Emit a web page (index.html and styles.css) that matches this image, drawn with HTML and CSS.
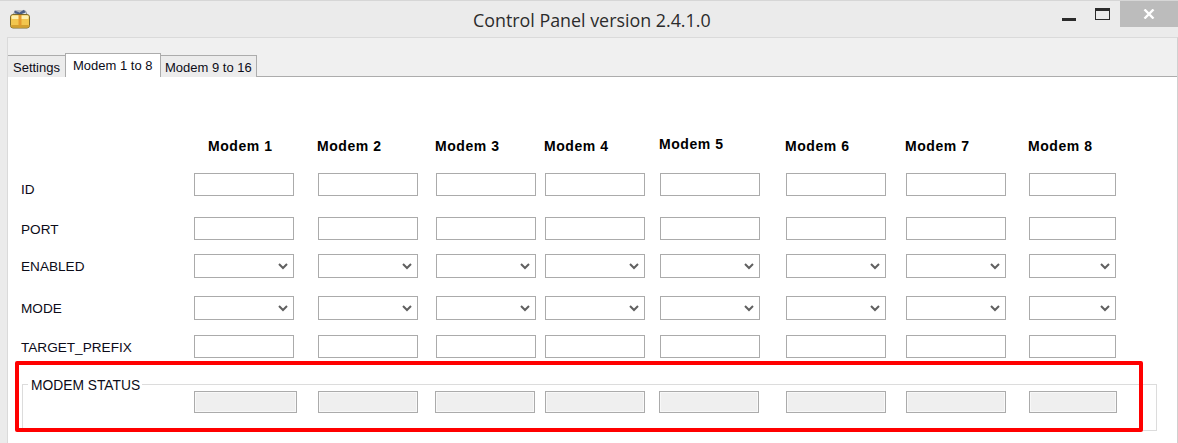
FILE: index.html
```html
<!DOCTYPE html>
<html lang="en">
<head>
  <meta charset="UTF-8" />
  <title>Control Panel version 2.4.1.0</title>
  <link rel="stylesheet" href="styles.css">
</head>
<body>

<div class="window">
  <header class="titlebar">
    <svg class="app-icon" width="20" height="20" viewBox="0 0 20 20">
      <path d="M3.5 5.5L5 2H15.5L17 5.5" fill="#dfe3e8" stroke="#8a8f96"/>
      <path d="M4.5 1.5L9.5 3.5L14 0.8L15.5 3.5L10.5 5.5L5 4.5Z" fill="#4b5f86"/>
      <rect x="0.5" y="5.5" width="19" height="13.5" rx="2.5" fill="#f2c64e" stroke="#7d6a2a"/>
      <rect x="1.5" y="6.5" width="17" height="3.5" rx="1" fill="#fdf0ae"/>
      <rect x="8.5" y="6" width="3" height="12.5" fill="#e59a2e"/>
      <rect x="1" y="16" width="18" height="2.5" rx="1" fill="#d4a02e"/>
    </svg>
    <h1 class="title">Control Panel version 2.4.1.0</h1>
    <div class="controls">
      <span class="minimize"></span>
      <span class="maximize"></span>
      <span class="close">
        <svg width="12" height="10" viewBox="0 0 12 10">
          <path d="M1.5 0.5L10.5 9.5M10.5 0.5L1.5 9.5" stroke="#fff" stroke-width="2.4" fill="none"/>
        </svg>
      </span>
    </div>
  </header>

  <div class="panel">
    <nav class="tabs">
      <a class="tab first">Settings</a>
      <a class="tab active">Modem 1 to 8</a>
      <a class="tab">Modem 9 to 16</a>
    </nav>

    <div class="page">
      <div class="grid">
        <span></span>
        <b class="head first">Modem 1</b>
        <b class="head">Modem 2</b>
        <b class="head">Modem 3</b>
        <b class="head">Modem 4</b>
        <b class="head raised">Modem 5</b>
        <b class="head">Modem 6</b>
        <b class="head">Modem 7</b>
        <b class="head">Modem 8</b>

        <label class="row-label id">ID</label>
        <input class="field"><input class="field"><input class="field"><input class="field">
        <input class="field"><input class="field"><input class="field"><input class="field short">

        <label class="row-label">PORT</label>
        <input class="field"><input class="field"><input class="field"><input class="field">
        <input class="field"><input class="field"><input class="field"><input class="field short">

        <label class="row-label">ENABLED</label>
        <div class="combo"><svg viewBox="0 0 10 7"><path d="M1 1L5 5L9 1" /></svg></div>
        <div class="combo"><svg viewBox="0 0 10 7"><path d="M1 1L5 5L9 1" /></svg></div>
        <div class="combo"><svg viewBox="0 0 10 7"><path d="M1 1L5 5L9 1" /></svg></div>
        <div class="combo"><svg viewBox="0 0 10 7"><path d="M1 1L5 5L9 1" /></svg></div>
        <div class="combo"><svg viewBox="0 0 10 7"><path d="M1 1L5 5L9 1" /></svg></div>
        <div class="combo"><svg viewBox="0 0 10 7"><path d="M1 1L5 5L9 1" /></svg></div>
        <div class="combo"><svg viewBox="0 0 10 7"><path d="M1 1L5 5L9 1" /></svg></div>
        <div class="combo short"><svg viewBox="0 0 10 7"><path d="M1 1L5 5L9 1" /></svg></div>

        <label class="row-label">MODE</label>
        <div class="combo"><svg viewBox="0 0 10 7"><path d="M1 1L5 5L9 1" /></svg></div>
        <div class="combo"><svg viewBox="0 0 10 7"><path d="M1 1L5 5L9 1" /></svg></div>
        <div class="combo"><svg viewBox="0 0 10 7"><path d="M1 1L5 5L9 1" /></svg></div>
        <div class="combo"><svg viewBox="0 0 10 7"><path d="M1 1L5 5L9 1" /></svg></div>
        <div class="combo"><svg viewBox="0 0 10 7"><path d="M1 1L5 5L9 1" /></svg></div>
        <div class="combo"><svg viewBox="0 0 10 7"><path d="M1 1L5 5L9 1" /></svg></div>
        <div class="combo"><svg viewBox="0 0 10 7"><path d="M1 1L5 5L9 1" /></svg></div>
        <div class="combo short"><svg viewBox="0 0 10 7"><path d="M1 1L5 5L9 1" /></svg></div>

        <label class="row-label">TARGET_PREFIX</label>
        <input class="field"><input class="field"><input class="field"><input class="field">
        <input class="field"><input class="field"><input class="field"><input class="field short">
      </div>

      <fieldset class="status">
        <legend>MODEM STATUS</legend>
        <div class="status-row">
          <input class="readout wide" disabled>
          <input class="readout" disabled>
          <input class="readout" disabled>
          <input class="readout" disabled>
          <input class="readout" disabled>
          <input class="readout" disabled>
          <input class="readout" disabled>
          <input class="readout last" disabled>
        </div>
      </fieldset>

      <div class="highlight"></div>
    </div>
  </div>
</div>

</body>
</html>
```

FILE: styles.css
```css
* { box-sizing: border-box; }
html, body {
  margin: 0; padding: 0;
  width: 1178px; height: 443px;
  overflow: hidden;
}
body {
  font-family: "Liberation Sans", Arial, sans-serif;
  font-size: 13.6px;
  color: #0c0c18;
  background: #ebebeb;
}
.window {
  height: 443px;
  border-top: 1px solid #d6d6d6;
  display: flex;
  flex-direction: column;
}
.titlebar {
  height: 36px;
  display: flex;
  align-items: flex-start;
  flex: none;
}
.app-icon {
  margin: 8px 0 0 10px;
  flex: none;
}
.title {
  margin: 7px 0 0 443px;
  font-family: "Open Sans", sans-serif;
  font-size: 17.85px;
  font-weight: 400;
  line-height: 24px;
  color: #2b2b2b;
  white-space: nowrap;
}
.controls {
  margin-left: auto;
  display: flex;
  align-items: flex-start;
}
.minimize {
  width: 14px; height: 3px;
  margin-top: 17px;
  background: #2b2b2b;
}
.maximize {
  width: 15px; height: 12px;
  margin: 7px 0 0 19px;
  border: 1px solid #2b2b2b;
  border-top-width: 3px;
}
.close {
  width: 58px; height: 26px;
  margin-left: 10px;
  background: #bcbcbc;
  display: flex;
  align-items: center;
  justify-content: center;
}
.panel {
  flex: 1;
  margin-left: 7px;
  border: 1px solid #dadada;
  border-right-color: #d0d0d0;
  border-bottom: none;
  background: #f0f0f0;
  display: flex;
  flex-direction: column;
  min-height: 0;
}
.tabs {
  flex: none;
  height: 39px;
  display: flex;
  align-items: flex-end;
  position: relative;
  z-index: 1;
  margin-bottom: -1px;
}
.tab {
  height: 22px;
  padding: 4px 4px 0 4px;
  border: 1px solid #acacac;
  border-left: none;
  border-bottom: none;
  background: #ececec;
  font-size: 13px;
  line-height: 15px;
  white-space: nowrap;
}
.tab.first { padding: 4px 5px 0 5px; }
.tab.active {
  height: 24px;
  width: 96px;
  padding: 4px 0 0 7px;
  border-left: 1px solid #acacac;
  background: #fff;
  margin-left: -1px;
}
.page {
  flex: 1;
  position: relative;
  background: #fff;
  border-top: 1px solid #acacac;
  padding: 60px 0 0 13px;
}
.grid {
  display: grid;
  grid-template-columns: 173px 124px 118px 109px 115px 126px 120px 123px 90px;
  grid-template-rows: 36px 44px 37px 42px 39px 26px;
  justify-items: start;
  align-items: start;
}
.head {
  font-size: 14px;
  letter-spacing: 0.55px;
  line-height: 18px;
  margin-left: -1px;
  color: #000;
  white-space: nowrap;
}
.head.first { margin-left: 14px; }
.head.raised { margin-top: -2px; }
.row-label {
  line-height: 16px;
  margin-top: 5px;
  white-space: nowrap;
}
.row-label.id { margin-top: 9px; }
.field, .combo {
  width: 100px;
  height: 23px;
  padding: 0;
  border: 1px solid #ababab;
  border-radius: 0;
  background: #fff;
  outline: none;
}
.field { margin: 0; }
.combo {
  height: 24px;
  display: flex;
  align-items: center;
  justify-content: flex-end;
  padding-right: 5px;
}
.combo svg {
  width: 10px; height: 7px;
  fill: none;
  stroke: #606060;
  stroke-width: 2;
}
.short { width: 87px; }
.status {
  position: absolute;
  left: 14px; top: 307px;
  width: 1135px;
  height: 47px;
  margin: 0;
  padding: 0 0 0 171px;
  border: 1px solid #dcdcdc;
}
.status legend {
  padding: 0 2px 0 3px;
  font-size: 13.8px;
  line-height: 14px;
  position: absolute;
  top: -6px;
  left: 5px;
  background: #fff;
}
.status-row {
  display: grid;
  grid-template-columns: 124px 117px 110px 114px 127px 120px 123px 88px;
  padding-top: 6px;
}
.readout {
  width: 100px;
  height: 22px;
  padding: 0;
  margin: 0;
  border: 1px solid #ababab;
  box-shadow: inset 0 0 0 1px #f8f8f8;
  border-radius: 0;
  background: #efefef;
}
.readout.wide { width: 103px; }
.readout.last { width: 88px; }
.highlight {
  position: absolute;
  left: 7px; top: 284px;
  width: 1128px;
  height: 71px;
  border: 4px solid #f00;
  border-radius: 2px;
}
```
